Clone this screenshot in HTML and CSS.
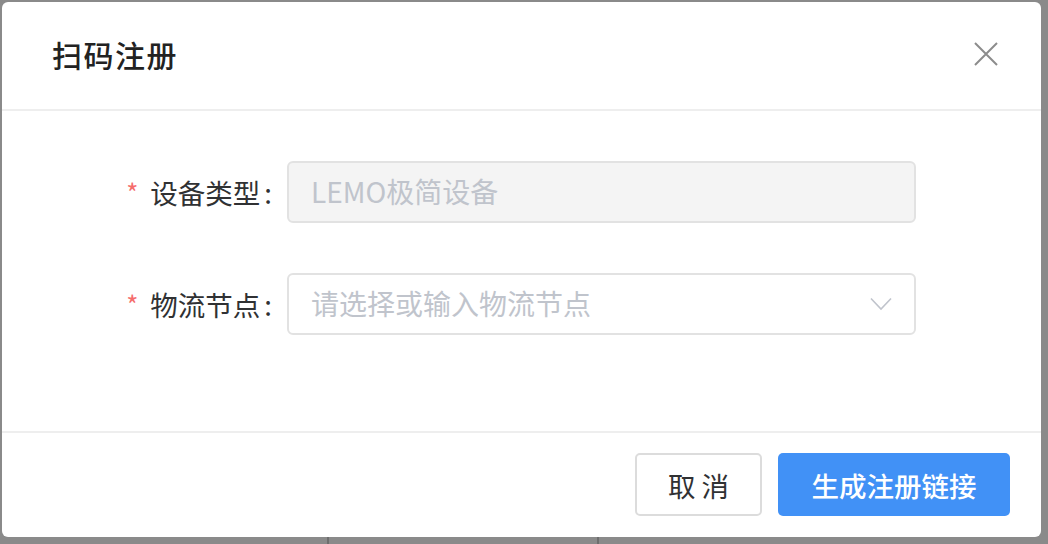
FILE: index.html
```html
<!DOCTYPE html>
<html lang="zh-CN">
<head>
<meta charset="utf-8">
<title>扫码注册</title>
<link rel="stylesheet" href="styles.css">
</head>
<body>
<div class="dialog">
  <header class="dialog-header">
    <span class="dialog-title">扫码注册</span>
    <button class="close-btn" aria-label="关闭">
      <svg width="24" height="24" viewBox="0 0 24 24"><path d="M1 1 L23 23 M23 1 L1 23" stroke="#8c8c8c" stroke-width="2" fill="none"/></svg>
    </button>
  </header>
  <main class="dialog-body">
    <div class="form-row">
      <label class="form-label"><span class="req">*</span>设备类型<span class="colon">:</span></label>
      <div class="input disabled">LEMO极简设备</div>
    </div>
    <div class="form-row">
      <label class="form-label"><span class="req">*</span>物流节点<span class="colon">:</span></label>
      <div class="input select">
        <span class="placeholder">请选择或输入物流节点</span>
        <svg class="chevron" width="22" height="14" viewBox="0 0 22 14"><path d="M1 1.5 L11 12 L21 1.5" stroke="#c0c4cc" stroke-width="1.6" fill="none"/></svg>
      </div>
    </div>
  </main>
  <footer class="dialog-footer">
    <button class="btn btn-default">取 消</button>
    <button class="btn btn-primary">生成注册链接</button>
  </footer>
</div>
</body>
</html>
```

FILE: styles.css
```css
* { box-sizing: border-box; }
html, body { margin: 0; height: 100%; }
body {
  padding: 2px 0 0 2px;
  background:
    linear-gradient(#6e6e6e, #6e6e6e) 327px 537px / 2px 7px no-repeat,
    linear-gradient(#6e6e6e, #6e6e6e) 597px 537px / 2px 7px no-repeat,
    #8a8a8a;
  font-family: "Noto Sans CJK SC", "Noto Sans", sans-serif;
  overflow: hidden;
}
.dialog {
  width: 1039px;
  height: 535px;
  background: #fff;
  border-radius: 6px;
  display: flex;
  flex-direction: column;
}
.dialog-header {
  height: 109px;
  border-bottom: 2px solid #eeeeee;
  display: flex;
  align-items: center;
  justify-content: space-between;
  padding: 0 43px 4px 50px;
}
.dialog-title {
  font-size: 30px;
  font-weight: 500;
  color: #222;
  letter-spacing: 1.5px;
}
.close-btn {
  border: 0;
  background: none;
  padding: 0;
  width: 24px;
  height: 24px;
  display: flex;
}
.dialog-body {
  flex: 1;
  padding-top: 50px;
  display: flex;
  flex-direction: column;
  gap: 50px;
  border-bottom: 2px solid #eeeeee;
}
.form-row {
  display: flex;
  align-items: center;
}
.form-label {
  width: 285px;
  padding-right: 15px;
  font-size: 27.5px;
  color: #303133;
  display: flex;
  justify-content: flex-end;
  align-items: center;
}
.colon {
  margin-left: 4px;
}
.req {
  color: #f56c6c;
  font-size: 26px;
  margin-right: 12px;
  position: relative;
  top: -1px;
}
.input {
  width: 629px;
  height: 62px;
  border: 2px solid #e2e2e2;
  border-radius: 6px;
  padding: 0 22px;
  display: flex;
  align-items: center;
  font-size: 28px;
  color: #c0c4cc;
  padding-bottom: 2px;
}
.input.disabled {
  background: #f4f4f4;
  color: #c0c4cc;
}
.input.select {
  justify-content: space-between;
  padding-right: 22px;
}
.chevron { margin-top: 2px; }
.placeholder { color: #c0c4cc; }
.dialog-footer {
  height: 104px;
  display: flex;
  justify-content: flex-end;
  align-items: flex-start;
  padding: 20px 31px 0 0;
  gap: 16px;
}
.btn {
  height: 63px;
  border-radius: 5px;
  font-family: inherit;
  font-size: 27.5px;
  cursor: pointer;
}
.btn-default {
  width: 127px;
  background: #fff;
  border: 2px solid #dcdcdc;
  color: #303133;
}
.btn-primary {
  width: 232px;
  background: #4191f6;
  border: 0;
  color: #fff;
  font-weight: 500;
}
```
